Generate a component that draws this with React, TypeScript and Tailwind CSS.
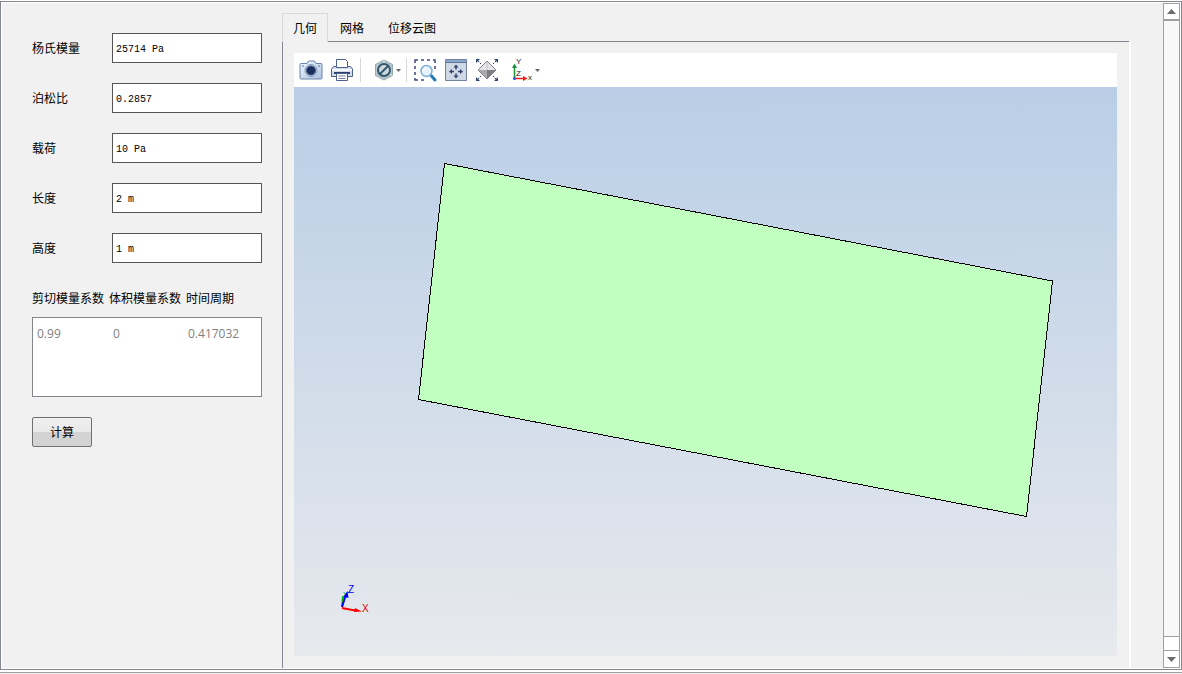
import { useState } from 'react'
import type { ReactNode } from 'react'

const fields = [
  { id: 'young', label: '杨氏模量', value: '25714 Pa' },
  { id: 'poisson', label: '泊松比', value: '0.2857' },
  { id: 'load', label: '载荷', value: '10 Pa' },
  { id: 'length', label: '长度', value: '2 m' },
  { id: 'height', label: '高度', value: '1 m' },
]

const tabs = ['几何', '网格', '位移云图']

function CameraIcon() {
  return (
    <svg width="24" height="24" viewBox="0 0 24 24" fill="none">
      <defs>
        <linearGradient id="camBody" x1="0" y1="0" x2="1" y2="1">
          <stop offset="0" stopColor="#f4f8fd" />
          <stop offset="1" stopColor="#a9c3e2" />
        </linearGradient>
      </defs>
      <path
        d="M2 5.5h6l1.5-2.5h6L17 5.5h5a1 1 0 0 1 1 1v13.5a1 1 0 0 1-1 1H2a1 1 0 0 1-1-1V6.5a1 1 0 0 1 1-1z"
        fill="url(#camBody)"
        stroke="#6d84a8"
      />
      <circle cx="12" cy="12.5" r="6" fill="#dce7f4" stroke="#7f95b5" />
      <circle cx="12" cy="12.5" r="4.5" fill="#1c2f5c" stroke="#35507f" />
      <path d="M19 8h2M3 8h2" stroke="#5b7299" />
    </svg>
  )
}

function PrinterIcon() {
  return (
    <svg width="24" height="24" viewBox="0 0 24 24" fill="none">
      <path d="M6.5 9V1.500h9l2 2V9" fill="#fff" stroke="#4c608a" />
      <path d="M3.500 8.500h17l2 2.500v7.500h-21V11z" fill="#d3dce8" stroke="#4c608a" />
      <path d="M6.500 7v2.500h11V7" fill="#fff" stroke="#4c608a" />
      <path d="M2 12h20" stroke="#f5f8fb" strokeWidth="2" />
      <path d="M4 15h16" stroke="#2c426e" strokeWidth="2" />
      <path d="M6.500 15.500h11v7h-11z" fill="#fff" stroke="#4c608a" />
      <path d="M8.500 18h7M8.500 20.500h7" stroke="#6d7f9f" />
    </svg>
  )
}

function ClipIcon() {
  return (
    <svg width="20" height="22" viewBox="0 0 20 22" fill="none">
      <path d="M10 1l8.500 4.500v11L10 21l-8.500-4.500v-11z" fill="#b7c8cd" stroke="#91a8af" />
      <path d="M10 1v10l8.500 5.500" stroke="#dbe5e8" />
      <circle cx="10" cy="11" r="6" fill="#ccdadd" stroke="#33566c" strokeWidth="2" />
      <path d="M5.500 15.500l9-9" stroke="#33566c" strokeWidth="2" />
    </svg>
  )
}

function ZoomBoxIcon() {
  return (
    <svg width="24" height="24" viewBox="0 0 24 24" fill="none">
      <path
        d="M2 5V2h3M8 2h3M14 2h3M20 2h2v3M2 8v3M2 14v3M2 20v2h3M8 22h3M22 8v3"
        stroke="#3f4b78"
        strokeWidth="1.5"
      />
      <path d="M18 17.500L22 22" stroke="#2179b5" strokeWidth="3" strokeLinecap="round" />
      <circle cx="13.500" cy="13" r="5.500" fill="#e5f3fc" stroke="#7fb0d3" strokeWidth="1.5" />
      <path d="M10.500 13a3 3 0 0 1 3-3" stroke="#fff" strokeWidth="1.5" />
    </svg>
  )
}

function FitIcon() {
  return (
    <svg width="24" height="24" viewBox="0 0 24 24" fill="none">
      <path d="M1.500 1.500h21v21h-21z" fill="#cfd9e5" stroke="#70829f" />
      <path d="M2 2h20v2H2z" fill="#8fa7c8" />
      <path d="M1 4.500h22" stroke="#5c7194" />
      <path d="M12 6.500l2.500 3h-5zM12 20.500l2.500-3h-5zM5 13.500l3-2.500v5zM19 13.500l-3-2.500v5z" fill="#30456f" />
      <path d="M12 9v2.500M12 15.500V18M7 13.500h3M14 13.500h3" stroke="#30456f" strokeWidth="1.5" />
    </svg>
  )
}

function ExtentsIcon() {
  return (
    <svg width="24" height="24" viewBox="0 0 24 24" fill="none">
      <path d="M12 3l9 9H3z" fill="#e4e4e6" />
      <path d="M3 12h9v9z" fill="#a9abb0" />
      <path d="M12 12h9l-9 9z" fill="#7d7f84" />
      <path d="M12 3l9 9-9 9-9-9z" stroke="#85878c" />
      <path d="M12 4v8" stroke="#c4c6ca" />
      <path d="M1 1h4L1 5zM23 1v4l-4-4zM1 23v-4l4 4zM23 23h-4l4-4z" fill="#30456f" />
      <path d="M2 2l4 4M22 2l-4 4M2 22l4-4M22 22l-4-4" stroke="#30456f" strokeDasharray="3 1" />
    </svg>
  )
}

function AxesIcon() {
  return (
    <svg width="22" height="24" viewBox="0 0 22 24" fill="none" fontFamily="Liberation Sans, sans-serif">
      <path d="M3.500 20V9" stroke="#1d8f3f" strokeWidth="1.5" />
      <path d="M3.500 5.500L6 10H1z" fill="#1d8f3f" />
      <path d="M4 20.500h9" stroke="#ee1c1c" strokeWidth="1.5" />
      <path d="M16.500 20.500L12 18v5z" fill="#ee1c1c" />
      <circle cx="3.500" cy="20.500" r="1.500" fill="#2456d6" />
      <text x="5" y="6" fontSize="8" fill="#222">Y</text>
      <text x="5" y="18" fontSize="8" fill="#222">Z</text>
      <text x="17" y="22" fontSize="8" fill="#222">x</text>
    </svg>
  )
}

function Caret() {
  return (
    <svg width="5" height="3" viewBox="0 0 5 3">
      <path d="M0 0h5L2.500 3z" fill="#666" />
    </svg>
  )
}

function ToolButton({ label, children }: { label: string; children: ReactNode }) {
  return (
    <button type="button" aria-label={label} className="flex shrink-0 items-center gap-0.5">
      {children}
    </button>
  )
}

function Toolbar() {
  return (
    <div className="flex h-[34px] items-center bg-white pl-[5px]">
      <div className="flex items-center gap-[7px] border-r border-[#d8d8d8] pr-[6px]">
        <ToolButton label="截图"><CameraIcon /></ToolButton>
        <ToolButton label="打印"><PrinterIcon /></ToolButton>
      </div>
      <div className="flex items-center border-r border-[#d8d8d8] pr-[5px] pl-[13px]">
        <ToolButton label="裁剪"><span className="py-px"><ClipIcon /></span><Caret /></ToolButton>
      </div>
      <div className="flex items-center gap-[7px] pl-[6px]">
        <ToolButton label="框选缩放"><ZoomBoxIcon /></ToolButton>
        <ToolButton label="适应窗口"><FitIcon /></ToolButton>
        <ToolButton label="缩放到全部"><ExtentsIcon /></ToolButton>
      </div>
      <div className="flex items-center pl-[12px]">
        <ToolButton label="视图方向"><AxesIcon /><Caret /></ToolButton>
      </div>
    </div>
  )
}

function Viewport() {
  return (
    <div className="flex min-h-0 flex-1 bg-linear-to-b from-[#b9cee6] to-[#e7e9ed]">
      <svg className="h-full w-full" viewBox="0 0 823 569" fill="none">
        <path
          d="M150.500 76.500L758.500 194 732.500 429.500 124.500 312.500z"
          fill="#c0ffc0"
          stroke="#000"
          shapeRendering="crispEdges"
        />
        {/* orientation triad */}
        <g fontFamily="Liberation Sans, sans-serif">
          <path d="M48 520l1-11" stroke="#00c000" strokeWidth="2" />
          <text x="49" y="511" fontSize="9" fill="#00c000">Y</text>
          <path d="M48 520l3.500-11" stroke="#00f" strokeWidth="2" />
          <path d="M53.500 504l1 7-5-1.500z" fill="#00f" />
          <path d="M48 521l13 2.500" stroke="#f00" strokeWidth="2" />
          <path d="M68 524.500l-8 .5 1-4z" fill="#f00" />
          <text x="54" y="506" fontSize="10" fill="#00f">Z</text>
          <text x="68" y="525" fontSize="10" fill="#e00000">X</text>
        </g>
      </svg>
    </div>
  )
}

function ParameterForm() {
  return (
    <form className="w-[280px] shrink-0 pt-[30px] pl-[30px]" onSubmit={(e) => e.preventDefault()}>
      <div className="flex flex-col gap-5">
        {fields.map((f) => (
          <div key={f.id} className="flex h-[30px] items-center">
            <label htmlFor={f.id} className="w-20 pt-0.5">{f.label}</label>
            <input
              id={f.id}
              defaultValue={f.value}
              className="h-full w-[150px] border border-[#555] bg-white px-[3px] pt-0.5 font-['Liberation_Mono','Noto_Sans_CJK_SC',monospace] text-[10px] outline-none"
            />
          </div>
        ))}
      </div>
      <table className="mt-5 w-[230px] table-fixed">
        <thead>
          <tr className="h-[30px] text-left whitespace-nowrap">
            <th className="w-[77px] pt-0.5 font-normal">剪切模量系数</th>
            <th className="w-[77px] pt-0.5 font-normal">体积模量系数</th>
            <th className="pt-0.5 font-normal">时间周期</th>
          </tr>
        </thead>
      </table>
      <div className="mt-1 h-20 w-[230px] border border-[#828790] bg-white pt-[7px] pl-1 text-[#808080]">
        <table className="w-full table-fixed font-['Open_Sans',sans-serif]">
          <tbody>
            <tr>
              <td className="w-[76px]">0.99</td>
              <td className="w-[75px]">0</td>
              <td>0.417032</td>
            </tr>
          </tbody>
        </table>
      </div>
      <button
        type="submit"
        className="mt-5 h-[30px] w-[60px] rounded-xs border border-[#707070] bg-linear-to-b from-[#f0f0f0] from-0% via-[#e8e8e8] via-50% to-[#d3d3d3] to-50% pt-0.5"
      >
        计算
      </button>
    </form>
  )
}

function ScrollBar() {
  return (
    <div className="flex w-[17px] shrink-0 flex-col border border-[#a0a0a0] bg-[#f8f8f8]">
      <button type="button" aria-label="向上滚动" className="flex h-[17px] items-center justify-center border-b-2 border-[#a0a0a0] bg-white">
        <svg width="9" height="5" viewBox="0 0 9 5"><path d="M4.500 0L9 5H0z" fill="#6b6b6b" /></svg>
      </button>
      <div className="flex-1" />
      <div className="h-[15px] border-y border-[#a0a0a0] bg-white" />
      <button type="button" aria-label="向下滚动" className="flex h-4 items-center justify-center bg-white">
        <svg width="9" height="5" viewBox="0 0 9 5"><path d="M0 0h9L4.500 5z" fill="#6b6b6b" /></svg>
      </button>
    </div>
  )
}

function App() {
  const [active, setActive] = useState(tabs[0])

  return (
    <div className="flex h-screen flex-col bg-white pt-px font-['Liberation_Sans','Noto_Sans_CJK_SC',sans-serif] text-[12px] leading-[18px] text-black">
      <div className="flex min-h-0 flex-1 border border-[#828790] p-px">
        <main className="flex min-w-0 flex-1 bg-[#f1f1f1]">
          <ParameterForm />
          <section className="mr-8 flex min-w-0 flex-1 flex-col pt-[10px]">
            <div role="tablist" className="flex h-[29px]">
              {tabs.map((t) => (
                <button
                  key={t}
                  type="button"
                  role="tab"
                  aria-selected={t === active}
                  onClick={() => setActive(t)}
                  className={
                    t === active
                      ? 'border border-b-0 border-[#d9d9d9] px-[10px] pt-0.5'
                      : 'border-b border-[#828790] px-3 pt-1'
                  }
                >
                  {t}
                </button>
              ))}
              <div className="mr-0.5 flex-1 border-b border-[#828790]" />
            </div>
            <div className="flex min-h-0 flex-1 flex-col border-r-2 border-l border-r-white border-l-[#828790] pt-[11px] pr-3 pb-3 pl-[11px]">
              <Toolbar />
              <Viewport />
            </div>
          </section>
        </main>
        <ScrollBar />
      </div>
      <footer className="mt-0.5 h-0.5 border-t border-[#a0a0a0] bg-[#f0f0f0]" />
    </div>
  )
}

export default App
